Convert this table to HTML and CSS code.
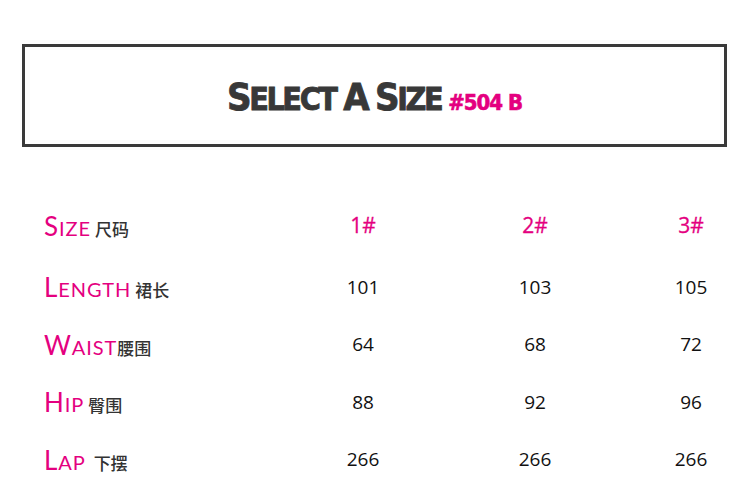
FILE: index.html
```html
<!DOCTYPE html>
<html>
<head>
<meta charset="utf-8">
<link rel="stylesheet" href="styles.css">
</head>
<body>
<div class="header">
  <h1 class="title"><span class="big">S</span>ELECT <span class="big">A</span> <span class="big">S</span>IZE<span class="code">#504 B</span></h1>
</div>
<div class="table">
  <div class="label"><span class="en"><span class="cap">S</span>IZE</span> <span class="cn">尺码</span></div>
  <div class="head">1#</div>
  <div class="head">2#</div>
  <div class="head">3#</div>

  <div class="label"><span class="en"><span class="cap">L</span>ENGTH</span> <span class="cn">裙长</span></div>
  <div class="val">101</div>
  <div class="val">103</div>
  <div class="val">105</div>

  <div class="label"><span class="en"><span class="cap">W</span>AIST</span><span class="cn">腰围</span></div>
  <div class="val">64</div>
  <div class="val">68</div>
  <div class="val">72</div>

  <div class="label"><span class="en"><span class="cap">H</span>IP</span> <span class="cn">臀围</span></div>
  <div class="val">88</div>
  <div class="val">92</div>
  <div class="val">96</div>

  <div class="label"><span class="en"><span class="cap">L</span>AP</span> &nbsp;<span class="cn">下摆</span></div>
  <div class="val">266</div>
  <div class="val">266</div>
  <div class="val">266</div>
</div>
</body>
</html>
```
FILE: styles.css
```css
html, body {
  margin: 0;
  padding: 0;
  background: #fff;
}
body {
  width: 750px;
  height: 492px;
  overflow: hidden;
}
.header {
  margin: 44px 0 0 22px;
  width: 705px;
  height: 103px;
  box-sizing: border-box;
  border: 3px solid #3a3a3a;
  display: flex;
  align-items: center;
  justify-content: center;
}
.title {
  margin: 2px 0 0 0;
  font-family: "DejaVu Sans Condensed", "DejaVu Sans", sans-serif;
  font-weight: bold;
  font-size: 32px;
  letter-spacing: -2.4px;
  color: #383838;
  -webkit-text-stroke: 0.8px #383838;
  line-height: 1;
  white-space: nowrap;
}
.title .big {
  font-size: 38px;
}
.title .code {
  margin-left: 7px;
  font-size: 22px;
  color: #e4007f;
  -webkit-text-stroke: 0.6px #e4007f;
  letter-spacing: -1px;
}
.table {
  margin-top: 46px;
  padding-left: 44px;
  display: grid;
  grid-template-columns: 257px 124px 220px 92px;
  grid-template-rows: 65.5px;
  grid-auto-rows: 57.5px;
  align-items: center;
}
.label {
  white-space: nowrap;
  line-height: 1;
}
.en {
  font-family: Lato, "Open Sans", sans-serif;
  font-size: 20px;
  color: #e4007f;
  letter-spacing: 0.9px;
}
.en .cap {
  font-size: 26px;
}
.cn {
  font-family: "Noto Sans CJK SC", sans-serif;
  font-size: 17px;
  font-weight: 500;
  color: #333;
}
.head, .val {
  text-align: center;
  font-family: "Open Sans", sans-serif;
  font-size: 19px;
  line-height: 1;
}
.head {
  color: #e4007f;
  font-size: 21px;
  font-weight: 400;
  -webkit-text-stroke: 0.3px #e4007f;
}
.val {
  color: #111;
}
```
